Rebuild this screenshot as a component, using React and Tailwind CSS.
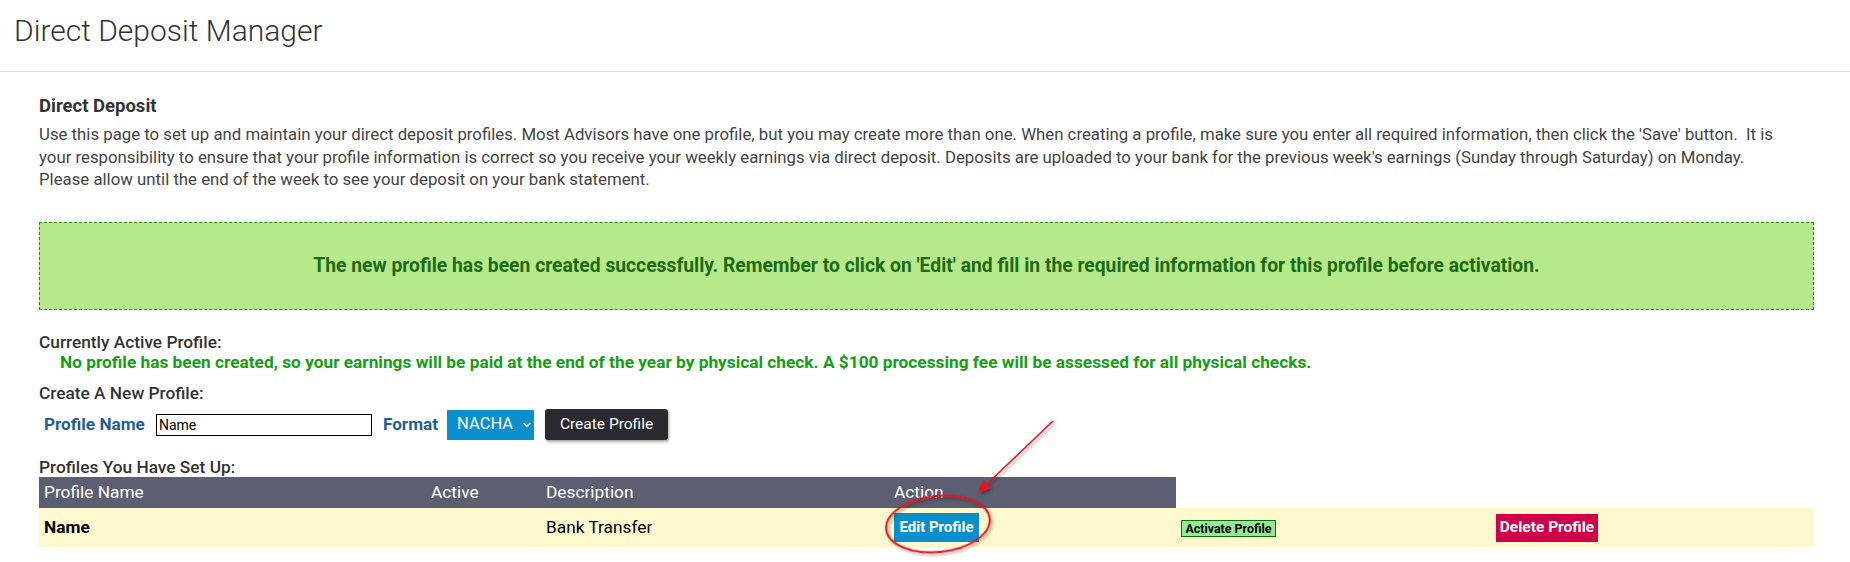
import { ChevronDown } from "lucide-react"

const font = { fontFamily: "Roboto, 'Liberation Sans', sans-serif" }

// Callout drawn over the table: arrow pointing at the edit button, circled
const Callout = () => (
  <svg className="pointer-events-none absolute left-0 top-0" width="1850" height="562" viewBox="0 0 1850 562">
    <defs>
      <filter id="soft" x="-20%" y="-20%" width="140%" height="140%">
        <feDropShadow dx="2" dy="2" stdDeviation="1.5" floodColor="#000" floodOpacity="0.35" />
      </filter>
    </defs>
    <g filter="url(#soft)">
      <line x1="1053" y1="421" x2="985" y2="486" stroke="#e3141c" strokeWidth="1.6" />
      <polygon points="978,493 983,480 991,488" fill="#e3141c" />
      <ellipse cx="938" cy="524" rx="52" ry="28" transform="rotate(-6 938 524)" fill="none" stroke="#e3141c" strokeWidth="2" />
    </g>
  </svg>
)

const App = () => {
  return (
    <div className="relative h-[562px] w-[1850px] overflow-hidden bg-white text-[#333]" style={font}>
      <div className="h-[72px] border-b border-[#d9d9d9] pl-[14px] pt-[13px]">
        <h1 className="text-[30px] font-light leading-[36px] text-[#333]">Direct Deposit Manager</h1>
      </div>

      <div className="pl-[39px] pr-[36px]">
        <h2 className="mt-[23px] text-[18.5px] font-bold leading-[22px] text-[#333]">Direct Deposit</h2>
        <p className="mt-[6px] text-[16.8px] leading-[22.7px] text-[#444]">
          Use this page to set up and maintain your direct deposit profiles. Most Advisors have one profile, but you may create more than one. When
          creating a profile, make sure you enter all required information, then click the 'Save' button.&nbsp; It is
          <br />
          your responsibility to ensure that your profile information is correct so you receive your weekly earnings via direct deposit. Deposits are
          uploaded to your bank for the previous week's earnings (Sunday through Saturday) on Monday.
          <br />
          Please allow until the end of the week to see your deposit on your bank statement.
        </p>

        <div className="mt-[31px] flex h-[88px] items-center justify-center border border-dashed border-[#2f8a22] bg-[#b6e98c]">
          <span className="text-[19.3px] font-bold text-[#1d6b12]">
            The new profile has been created successfully. Remember to click on 'Edit' and fill in the required information for this profile before
            activation.
          </span>
        </div>

        <div className="mt-[22px] text-[17.3px] font-medium leading-[20px]">Currently Active Profile:</div>
        <div className="pl-[21px] text-[17.3px] font-bold leading-[20px] text-[#14a014]">
          No profile has been created, so your earnings will be paid at the end of the year by physical check. A $100 processing fee will be assessed
          for all physical checks.
        </div>

        <div className="mt-[11px] text-[17.3px] font-medium leading-[20px]">Create A New Profile:</div>
        <div className="mt-[6px] flex items-center pl-[5px]">
          <span className="text-[17.2px] font-bold text-[#1f5f96]">Profile Name</span>
          <input
            defaultValue="Name"
            className="ml-[11px] h-[22px] w-[216px] border border-black px-[2px] text-[14px] text-black outline-none"
          />
          <span className="ml-[11px] text-[17.2px] font-bold text-[#1f5f96]">Format</span>
          <div className="ml-[9px] flex h-[30px] w-[87px] items-center gap-[8px] bg-[#0a8fd0] pl-[10px] text-[16.5px] text-white">
            NACHA
            <ChevronDown size={12} strokeWidth={3} />
          </div>
          <button className="ml-[11px] h-[31px] w-[123px] rounded-[3px] bg-[#2b2a30] text-[15.5px] text-white shadow-[1px_2px_3px_rgba(0,0,0,0.35)]">
            Create Profile
          </button>
        </div>

        <div className="mt-[17px] text-[17.3px] font-medium leading-[20px]">Profiles You Have Set Up:</div>
        <div className="grid w-fit grid-cols-[387px_115px_348px_287px] bg-[#5c5f71] text-[17.3px] leading-[31px] text-white">
          <div className="pl-[5px]">Profile Name</div>
          <div className="pl-[5px]">Active</div>
          <div className="pl-[5px]">Description</div>
          <div className="pl-[5px]">Action</div>
        </div>
        <div className="grid h-[39px] grid-cols-[387px_115px_348px_287px_315px_1fr] items-center bg-[#fdf9cd] text-[17.3px] text-black">
          <div className="pl-[5px] font-bold">Name</div>
          <div />
          <div className="pl-[5px]">Bank Transfer</div>
          <div className="pl-[5px]">
            <button className="h-[29px] w-[85px] bg-[#0a8fcd] text-[15px] font-bold text-white">Edit Profile</button>
          </div>
          <div className="pl-[5px]">
            <button className="h-[17px] w-[95px] border border-[#0d6b0d] bg-[#90ee90] text-[12.4px] font-bold leading-[15px] text-black">
              Activate Profile
            </button>
          </div>
          <div className="pl-[5px]">
            <button className="h-[28px] w-[102px] bg-[#cf0047] text-[15.5px] font-bold text-white">Delete Profile</button>
          </div>
        </div>
      </div>

      <Callout />
    </div>
  )
}

export default App
